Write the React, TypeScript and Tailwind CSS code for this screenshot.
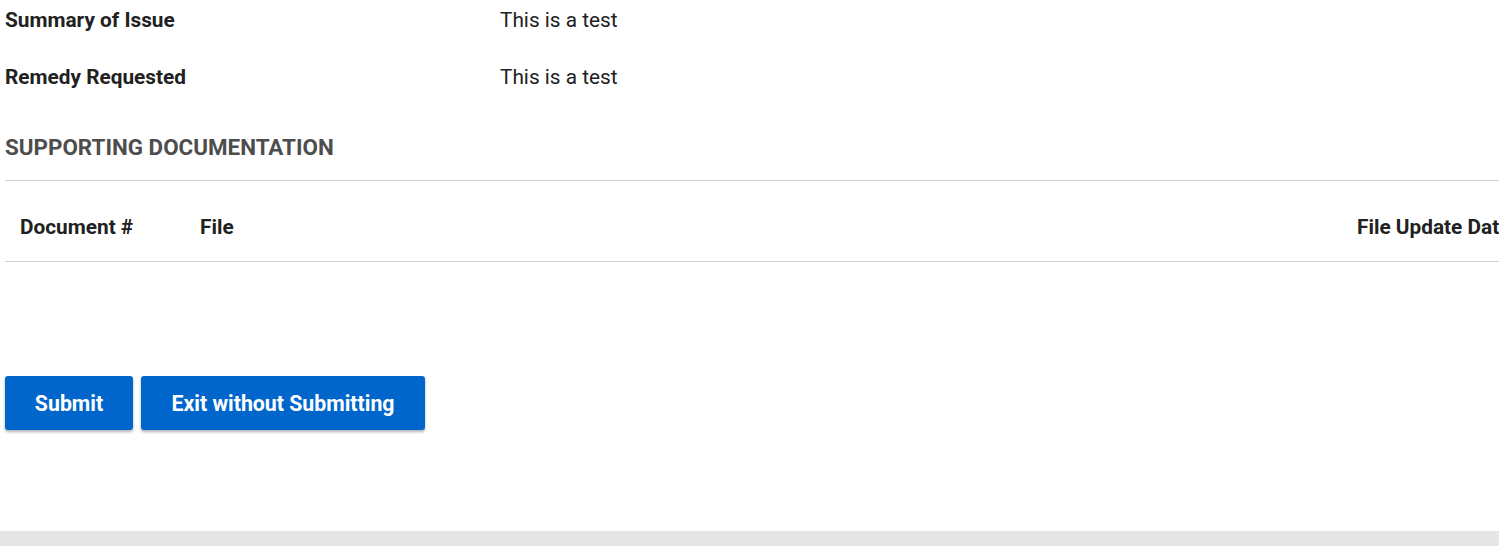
export default function App() {
  return (
    <div className="flex min-h-[546px] w-[1499px] flex-col overflow-hidden bg-white font-['Roboto',sans-serif] text-[#212121]">
      <div className="flex-1 pl-[5px] pt-[1px]">
        <div className="flex h-[40px] items-center text-[20.8px]">
          <div className="w-[495px] font-bold">Summary of Issue</div>
          <div>This is a test</div>
        </div>
        <div className="mt-[17px] flex h-[40px] items-center text-[20.8px]">
          <div className="w-[495px] font-bold">Remedy Requested</div>
          <div>This is a test</div>
        </div>
        <h2 className="mt-[30px] flex h-[40px] items-center text-[22.4px] font-bold text-[#4d4d4d]">
          SUPPORTING DOCUMENTATION
        </h2>
        <div className="mt-[12px] w-[1542px] border-t border-[#d0d0d0]">
          <div className="flex h-[80px] items-center pt-[14px] text-[20.8px] font-bold">
            <div className="w-[195px] pl-[15px]">Document #</div>
            <div className="flex-1">File</div>
            <div className="w-[190px] whitespace-nowrap">File Update Date</div>
          </div>
          <div className="border-t border-[#d0d0d0]" />
        </div>
        <div className="mt-[114px] flex gap-2">
          <button className="h-[54px] w-[128px] rounded-[3px] bg-[#0066cc] pt-[1px] text-[21.3px] font-bold text-white shadow-[0_2px_3px_rgba(0,0,0,0.3)]">
            Submit
          </button>
          <button className="h-[54px] w-[284px] rounded-[3px] bg-[#0066cc] pt-[1px] text-[21.3px] font-bold text-white shadow-[0_2px_3px_rgba(0,0,0,0.3)]">
            Exit without Submitting
          </button>
        </div>
      </div>
      <div className="h-[15px] bg-[#e6e6e6]" />
    </div>
  );
}
